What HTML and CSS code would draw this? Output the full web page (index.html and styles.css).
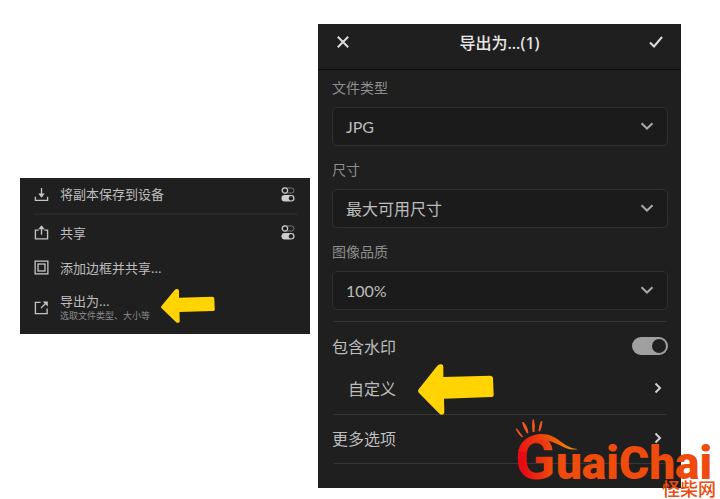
FILE: index.html
```
<!DOCTYPE html>
<html lang="zh-CN">
<head>
    <meta charset="UTF-8">
    <meta name="viewport" content="width=device-width, initial-scale=1.0">
    <title>导出为</title>
    <link rel="stylesheet" href="styles.css">
</head>
<body>
    <!-- shared shapes -->
    <svg class="defs" width="0" height="0" aria-hidden="true">
        <symbol id="arrow" viewBox="0 0 228 153" preserveAspectRatio="none">
            <path d="M2 76 L58 5 Q63 -1 71 1 Q76 2 76 9 V39 L216 35 Q225 35 225 43 L227 92 Q227 99 219 99 L78 104 L79 145 Q79 152 72 152 Q67 153 63 148 L3 87 Q-2 81 2 76 Z" fill="#ffd400"/>
        </symbol>
        <symbol id="switches" viewBox="0 0 14 15">
            <rect x="1" y="1" width="12" height="5" rx="2.5" fill="none" stroke="#777" stroke-width="1"/>
            <circle cx="4" cy="3.5" r="2.7" fill="#1f1f1f" stroke="#ccc" stroke-width="1.2"/>
            <rect x="0.5" y="8" width="13" height="6.4" rx="3.2" fill="#ccc"/>
            <circle cx="10" cy="11.2" r="2.2" fill="#1f1f1f"/>
        </symbol>
        <symbol id="down" viewBox="0 0 14 8">
            <path d="M1.5 1.2 L7 6.5 L12.5 1.2" fill="none" stroke="#a8a8a8" stroke-width="2"/>
        </symbol>
        <symbol id="right" viewBox="0 0 8 12">
            <path d="M1.5 1.5 L6 6 L1.5 10.5" fill="none" stroke="#d0d0d0" stroke-width="2"/>
        </symbol>
    </svg>

    <main class="page">
        <div class="menu">
            <button class="menu-item first" type="button">
                <svg class="icon" viewBox="0 0 16 16"><path d="M1.5 10.5 V14.3 H14.5 V10.5 M8 1 V10.5" /><path class="solid" d="M4.5 7 H11.5 L8 11.5 Z"/></svg>
                <span class="menu-text">将副本保存到设备</span>
                <svg class="switches"><use href="#switches"/></svg>
            </button>
            <hr class="menu-line">
            <button class="menu-item" type="button">
                <svg class="icon" viewBox="0 0 16 16"><path d="M5 5.5 H1.5 V14.8 H14.5 V5.5 H11 M8 10.5 V2.5"/><path class="solid" d="M4.5 4.5 H11.5 L8 0.3 Z"/></svg>
                <span class="menu-text">共享</span>
                <svg class="switches"><use href="#switches"/></svg>
            </button>
            <button class="menu-item" type="button">
                <svg class="icon" viewBox="0 0 16 16"><rect x="1.2" y="1.2" width="13.6" height="13.6"/><rect x="4.3" y="4.3" width="7.4" height="7.4"/></svg>
                <span class="menu-text">添加边框并共享...</span>
            </button>
            <div class="menu-last">
                <button class="menu-item tall" type="button">
                    <svg class="icon" viewBox="0 0 16 16"><path d="M7 2.5 H1.5 V14.5 H14 V9 M7.5 8.5 L12.5 3.5"/><path class="solid" d="M9.3 1.5 H14.7 V6.9 Z"/></svg>
                    <span class="menu-text">导出为...<small>选取文件类型、大小等</small></span>
                </button>
                <svg class="arrow arrow-small"><use href="#arrow"/></svg>
            </div>
        </div>

        <div class="export">
            <header class="export-header">
                <button class="icon-btn" type="button" aria-label="关闭">
                    <svg width="14" height="14" viewBox="0 0 14 14"><path d="M1.8 1.8 L12.2 12.2 M12.2 1.8 L1.8 12.2"/></svg>
                </button>
                <h1>导出为...(1)</h1>
                <button class="icon-btn" type="button" aria-label="完成">
                    <svg width="14" height="14" viewBox="0 0 14 14"><path d="M1 7.5 L5 11.5 L13 2"/></svg>
                </button>
            </header>

            <form class="fields">
                <div class="field">
                    <label for="fileType">文件类型</label>
                    <div class="select-box">
                        <select id="fileType" class="latin"><option>JPG</option></select>
                        <svg class="down"><use href="#down"/></svg>
                    </div>
                </div>
                <div class="field">
                    <label for="size">尺寸</label>
                    <div class="select-box">
                        <select id="size"><option>最大可用尺寸</option></select>
                        <svg class="down"><use href="#down"/></svg>
                    </div>
                </div>
                <div class="field">
                    <label for="quality">图像品质</label>
                    <div class="select-box">
                        <select id="quality" class="latin"><option>100%</option></select>
                        <svg class="down"><use href="#down"/></svg>
                    </div>
                </div>
            </form>

            <div class="options">
                <hr>
                <div class="watermark">
                    <div class="option">
                        <label for="watermark">包含水印</label>
                        <input class="toggle" type="checkbox" id="watermark" checked>
                    </div>
                    <div class="custom">
                        <button class="option indent" type="button">自定义<svg class="right"><use href="#right"/></svg></button>
                        <svg class="arrow arrow-big"><use href="#arrow"/></svg>
                    </div>
                </div>
                <hr>
                <button class="option more" type="button">更多选项<svg class="right"><use href="#right"/></svg></button>
                <hr>
            </div>

            <div class="logo">
                <svg class="logo-rays" width="66" height="34" viewBox="0 0 66 34">
                    <defs>
                        <linearGradient id="swoosh" x1="0" x2="1">
                            <stop offset="0" stop-color="#e81414"/>
                            <stop offset="0.6" stop-color="#ed5a0c"/>
                            <stop offset="1" stop-color="#f39a10"/>
                        </linearGradient>
                    </defs>
                    <path d="M0.5 11 L2 10.5 L8 18.5 L7 19.5 Q3 16 0.5 11 Z M7 4 L8.5 4 Q13 9 13.5 15 L12 15.5 Q8 10 7 4 Z M17.5 1.5 L19 1.5 Q20.5 8 19.5 14 L17.5 14 Q16.5 7 17.5 1.5 Z M26 3 L27.5 3.5 Q27 9 25 13.5 L23.5 13 Q24 7 26 3 Z" fill="#f0571c"/>
                    <path d="M3 33 Q9 17 25 16 C43 15 47 30 63 31 C50 34 43 23 28 22 Q16 22 10 34 Z" fill="url(#swoosh)"/>
                </svg>
                <div class="logo-name"><span class="logo-g">G</span>uaiChai</div>
                <div class="logo-cn">怪柴网</div>
            </div>
        </div>
    </main>
</body>
</html>
```
FILE: styles.css
```
* {
    box-sizing: border-box;
}

body {
    margin: 0;
    background: #fff;
    color: #bdbdbd;
    font-family: "Noto Sans", "Noto Sans CJK SC", sans-serif;
    font-size: 16px;
}

button, select {
    font-family: inherit;
    font-size: inherit;
    color: inherit;
    border: none;
    background: none;
    cursor: pointer;
}

svg {
    display: block;
    flex: none;
}

.defs {
    position: absolute;
}

.page {
    display: grid;
    grid-template-columns: 290fr 363fr;
    gap: 8px;
    align-items: center;
    padding: 24px 39px 11px 20px;
}

/* left menu */
.menu {
    background: #1f1f1f;
}

.menu-item {
    display: flex;
    align-items: center;
    gap: 11px;
    width: 100%;
    height: 35px;
    padding: 0 15px 0 14px;
    text-align: left;
    font-size: 13px;
    line-height: 18px;
}

.menu-item.first {
    padding-bottom: 3px;
}

.menu-item.tall {
    height: 49px;
    padding-bottom: 5px;
}

.menu-text {
    flex: 1;
}

.menu-text small {
    display: block;
    font-size: 9px;
    line-height: 12px;
    color: #8c8c8c;
}

.menu-line {
    margin: 0 13px;
    border: none;
    border-top: 2px solid #292929;
}

.icon {
    width: 15px;
    height: 15px;
    fill: none;
    stroke: #c4c4c4;
    stroke-width: 1.4;
}

.icon .solid {
    fill: #c4c4c4;
    stroke: none;
}

.switches {
    width: 14px;
    height: 15px;
}

.menu-last, .custom {
    position: relative;
}

.arrow {
    position: absolute;
    pointer-events: none;
}

.arrow-small {
    left: 141px;
    top: 4px;
    width: 54px;
    height: 34px;
}

.arrow-big {
    left: 86px;
    top: -3px;
    width: 76px;
    height: 51px;
}

/* export panel */
.export {
    position: relative;
    background: #1f1f1f;
    padding-bottom: 24px;
}

.export-header {
    display: flex;
    align-items: center;
    justify-content: space-between;
    height: 46px;
    padding: 0 18px 9px;
    border-bottom: 1px solid #0c0c0c;
}

.export-header h1 {
    margin: 0;
    font-size: 16px;
    font-weight: 500;
    color: #e8e8e8;
}

.icon-btn {
    padding: 0;
}

.icon-btn path {
    fill: none;
    stroke: #dcdcdc;
    stroke-width: 2;
}

.fields {
    display: flex;
    flex-direction: column;
    gap: 6px;
    padding: 0 13px 0 14px;
}

.field label {
    display: block;
    font-size: 14px;
    line-height: 36px;
    padding-bottom: 1px;
    color: #8e8e8e;
}

.select-box {
    position: relative;
}

.select-box select {
    display: block;
    appearance: none;
    width: 100%;
    height: 39px;
    padding: 0 40px 0 13px;
    background: #1b1b1b;
    border: 1px solid #303030;
    border-radius: 5px;
}

.select-box .latin {
    font-family: Lato, sans-serif;
}

.down {
    position: absolute;
    right: 14px;
    top: 15px;
    width: 14px;
    height: 8px;
    pointer-events: none;
}

.options {
    padding: 11px 13px 0 14px;
}

.options hr {
    margin: 0 2px;
    border: none;
    border-top: 1px solid #373737;
}

.watermark {
    padding: 3px 0 5px;
}

.option {
    display: flex;
    align-items: center;
    justify-content: space-between;
    width: 100%;
    height: 42px;
    padding: 0;
}

.option.indent {
    padding-left: 16px;
}

.option.more {
    height: 48px;
    padding-bottom: 3px;
}

.right {
    width: 8px;
    height: 12px;
    margin-right: 6px;
}

.toggle {
    appearance: none;
    width: 36px;
    height: 18px;
    margin: 0;
    padding: 2px;
    border-radius: 9px;
    background: #a0a0a0;
    cursor: pointer;
}

.toggle::before {
    content: "";
    display: block;
    width: 14px;
    height: 14px;
    border-radius: 50%;
    background: #1f1f1f;
}

.toggle:checked::before {
    margin-left: auto;
}

/* site logo over the corner */
.logo {
    position: absolute;
    right: -35px;
    bottom: -11px;
    width: 201px;
    color: #ee4b0c;
    pointer-events: none;
}

.logo-rays {
    position: absolute;
    left: 0;
    bottom: 47px;
}

.logo-name {
    font-family: Roboto, sans-serif;
    font-size: 46px;
    font-weight: 900;
    line-height: 32px;
    white-space: nowrap;
}

.logo-g {
    font-size: 60px;
    font-weight: 700;
    line-height: 0;
    background: linear-gradient(90deg, #e60a14 20%, #ee4b0c 90%);
    background-clip: text;
    -webkit-background-clip: text;
    color: transparent;
}

.logo-cn {
    font-family: "Noto Sans CJK SC", sans-serif;
    font-size: 18px;
    font-weight: 500;
    line-height: 18px;
    padding-bottom: 2px;
    text-align: right;
}
```
